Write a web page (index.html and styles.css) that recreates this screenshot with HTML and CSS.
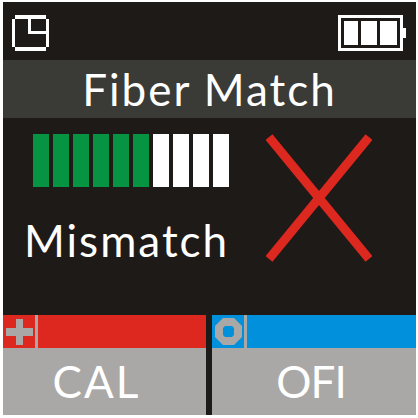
FILE: index.html
```html
<!DOCTYPE html>
<html lang="en">
<head>
  <meta charset="UTF-8" />
  <title>Fiber Match</title>
  <link rel="stylesheet" href="styles.css">
</head>
<body>
  <div class="screen">
    <div class="status">
      <svg class="clock" width="37" height="36" viewBox="0 0 37 36" fill="#fff">
        <rect x="3" y="0" width="31" height="4"/>
        <rect x="0" y="4" width="3" height="28"/>
        <rect x="34" y="4" width="3" height="28"/>
        <rect x="3" y="32" width="31" height="4"/>
        <rect x="16" y="4" width="3" height="15"/>
        <rect x="16" y="16" width="18" height="3"/>
      </svg>
      <svg class="battery" width="68" height="36" viewBox="0 0 68 36" fill="#fff">
        <path fill-rule="evenodd" d="M0 0H65V36H0Z M3 3V33H62V3Z"/>
        <rect x="6" y="6" width="14" height="24"/>
        <rect x="23" y="6" width="16" height="24"/>
        <rect x="42" y="6" width="17" height="24"/>
        <rect x="65" y="13" width="3" height="10"/>
      </svg>
    </div>
    <div class="title">Fiber Match</div>
    <div class="main">
      <div class="reading">
        <div class="bars">
          <span class="bar on"></span><span class="bar on"></span><span class="bar on"></span>
          <span class="bar on"></span><span class="bar on"></span><span class="bar on"></span>
          <span class="bar"></span><span class="bar"></span><span class="bar"></span><span class="bar"></span>
        </div>
        <div class="result">Mismatch</div>
      </div>
      <svg class="cross" width="106" height="128" viewBox="0 0 106 128">
        <path d="M3 3 103 125 M103 3 3 125" fill="none" stroke="#dc281e" stroke-width="9"/>
      </svg>
    </div>
    <div class="keys">
      <div class="key">
        <div class="key-bar red">
          <span class="key-icon">
            <svg width="27" height="26" viewBox="0 0 27 26" fill="#a9a8a6"><path d="M10 0H17V9H27V17H17V26H10V17H0V9H10Z"/></svg>
          </span>
        </div>
        <div class="key-label cal">CAL</div>
      </div>
      <div class="key">
        <div class="key-bar blue">
          <span class="key-icon">
            <svg width="27" height="27" viewBox="0 0 27 27"><path fill="#a9a8a6" fill-rule="evenodd" d="M8 0H19L27 8V19L19 27H8L0 19V8Z M10 8 8 10V17L10 19H17L19 17V10L17 8Z"/></svg>
          </span>
        </div>
        <div class="key-label ofi">OFI</div>
      </div>
    </div>
  </div>
</body>
</html>
```
FILE: styles.css
```css
* { box-sizing: border-box; margin: 0; padding: 0; }
html, body { height: 100%; background: #fff; }
body { padding: 2px 2px 3px 3px; font-family: Lato, 'Open Sans', sans-serif; color: #fff; }

.screen { height: 413px; display: flex; flex-direction: column; background: #1e1a18; }

.status { height: 58px; display: flex; justify-content: space-between; align-items: center; padding: 4px 10px 0 9px; }

.title { height: 58px; background: #3a3a37; font-size: 44px; line-height: 58px; letter-spacing: 2px; text-align: center; }

.main { flex: 1; display: flex; justify-content: space-between; padding: 16px 44px 0 30px; }
.bars { display: flex; gap: 4px; }
.bar { width: 16px; height: 53px; background: #fff; }
.bar.on { background: #069443; }
.result { margin-top: 23px; margin-left: -9px; font-size: 44px; line-height: 60px; letter-spacing: 2px; }

.keys { display: grid; grid-template-columns: 203px 204px; gap: 6px; }
.key-bar { height: 33px; display: flex; }
.key-bar.red { background: #dc281e; }
.key-bar.blue { background: #0090dc; }
.key-icon { width: 35px; border-right: 3px solid #a9a8a6; display: flex; align-items: center; justify-content: center; }
.key-label { height: 67px; background: #a9a8a6; font-size: 44px; line-height: 67px; text-align: center; }
.key-label.cal { padding-right: 16px; letter-spacing: 2px; }
.key-label.ofi { padding-right: 6px; letter-spacing: -1px; }
```
